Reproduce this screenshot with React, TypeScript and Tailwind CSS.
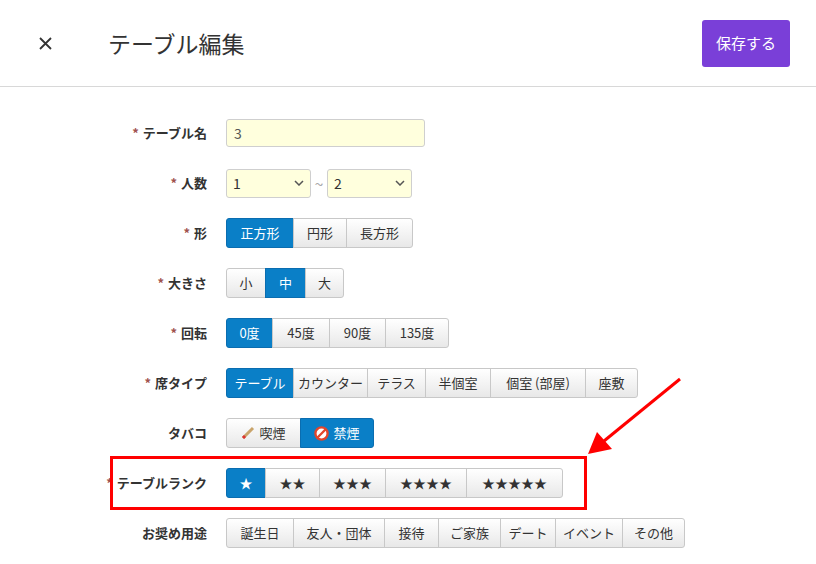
import React from "react";

type B = { t: React.ReactNode; w: number; on?: boolean };

function Group({ items }: { items: B[] }) {
  return (
    <div className="flex h-[30px]">
      {items.map((b, i) => (
        <div
          key={i}
          style={{ width: b.w }}
          className={`flex items-center justify-center text-[13px] border -ml-px first:ml-0 first:rounded-l-[3px] last:rounded-r-[3px] ${
            b.on
              ? "bg-[#0a7fc7] border-[#0a6db0] text-white"
              : "bg-gradient-to-b from-white to-[#e8e8e8] border-[#c8c8c8] text-[#333]"
          }`}
        >
          {b.t}
        </div>
      ))}
    </div>
  );
}

function Row({ label, req = true, children }: { label: string; req?: boolean; children: React.ReactNode }) {
  return (
    <div className="flex items-center h-[50px]">
      <div className="w-[207px] text-right text-[13px] font-bold text-[#333] pr-0">
        {req && <span className="text-[#a0524f] mr-1">*</span>}
        {label}
      </div>
      <div className="ml-[19px]">{children}</div>
    </div>
  );
}

const Sel = ({ v }: { v: string }) => (
  <div className="w-[85px] h-[29px] bg-[#ffffdd] border border-[#cfcfcf] rounded-[3px] flex items-center justify-between px-[6px] text-[14px] text-[#333]">
    <span>{v}</span>
    <svg width="10" height="6" viewBox="0 0 10 6"><path d="M1 1l4 4 4-4" stroke="#555" strokeWidth="1.5" fill="none" /></svg>
  </div>
);

export default function App() {
  return (
    <div className="w-[816px] h-[564px] bg-white relative overflow-hidden" style={{ fontFamily: '"Noto Sans CJK JP", "Liberation Sans", sans-serif' }}>
      <div className="h-[87px] border-b border-[#d8d8d8] flex items-center">
        <svg className="ml-[39px]" width="13" height="13" viewBox="0 0 13 13"><path d="M1 1l11 11M12 1L1 12" stroke="#333" strokeWidth="1.8" /></svg>
        <div className="ml-[56px] text-[23px] text-[#333]">テーブル編集</div>
        <div className="ml-auto mr-[26px] w-[88px] h-[47px] bg-[#7a3fd8] rounded-[3px] text-white text-[15px] flex items-center justify-center">保存する</div>
      </div>
      <div className="pt-[21px]">
        <Row label="テーブル名">
          <div className="w-[199px] h-[28px] bg-[#ffffdd] border border-[#cfcfcf] rounded-[3px] px-[7px] flex items-center text-[14px] text-[#555]">3</div>
        </Row>
        <Row label="人数">
          <div className="flex items-center">
            <Sel v="1" /><span className="w-[16px] text-center text-[#aaa]">~</span><Sel v="2" />
          </div>
        </Row>
        <Row label="形"><Group items={[{ t: "正方形", w: 68, on: true }, { t: "円形", w: 54 }, { t: "長方形", w: 67 }]} /></Row>
        <Row label="大きさ"><Group items={[{ t: "小", w: 40 }, { t: "中", w: 41, on: true }, { t: "大", w: 39 }]} /></Row>
        <Row label="回転"><Group items={[{ t: "0度", w: 47, on: true }, { t: "45度", w: 58 }, { t: "90度", w: 57 }, { t: "135度", w: 64 }]} /></Row>
        <Row label="席タイプ"><Group items={[{ t: "テーブル", w: 68, on: true }, { t: "カウンター", w: 75 }, { t: "テラス", w: 59 }, { t: "半個室", w: 66 }, { t: "個室 (部屋)", w: 96 }, { t: "座敷", w: 53 }]} /></Row>
        <Row label="タバコ" req={false}>
          <Group items={[
            { t: <span className="flex items-center gap-1"><svg width="14" height="14" viewBox="0 0 14 14"><path d="M2 12L12 2" stroke="#c9a46a" strokeWidth="3" /><path d="M2 12l2-2" stroke="#d33" strokeWidth="3" /></svg>喫煙</span>, w: 75 },
            { t: <span className="flex items-center gap-1"><svg width="15" height="15" viewBox="0 0 16 16"><circle cx="8" cy="8" r="6.5" fill="#fff" stroke="#e2452b" strokeWidth="2.5" /><path d="M3.5 12.5l9-9" stroke="#e2452b" strokeWidth="2.5" /></svg>禁煙</span>, w: 74, on: true },
          ]} />
        </Row>
        <Row label="テーブルランク"><Group items={[{ t: "★", w: 40, on: true }, { t: "★★", w: 55 }, { t: "★★★", w: 67 }, { t: "★★★★", w: 82 }, { t: "★★★★★", w: 97 }]} /></Row>
        <Row label="お奨め用途" req={false}><Group items={[{ t: "誕生日", w: 68 }, { t: "友人・団体", w: 92 }, { t: "接待", w: 55 }, { t: "ご家族", w: 63 }, { t: "デート", w: 56 }, { t: "イベント", w: 68 }, { t: "その他", w: 63 }]} /></Row>
      </div>
      <div className="absolute left-[110px] top-[456px] w-[477px] h-[54px] border-[3px] border-[#f00]" />
      <svg className="absolute left-0 top-0" width="816" height="564">
        <line x1="680" y1="379" x2="604" y2="441" stroke="#f00" strokeWidth="3" />
        <polygon points="588,454 597,432 612,449" fill="#f00" />
      </svg>
    </div>
  );
}
